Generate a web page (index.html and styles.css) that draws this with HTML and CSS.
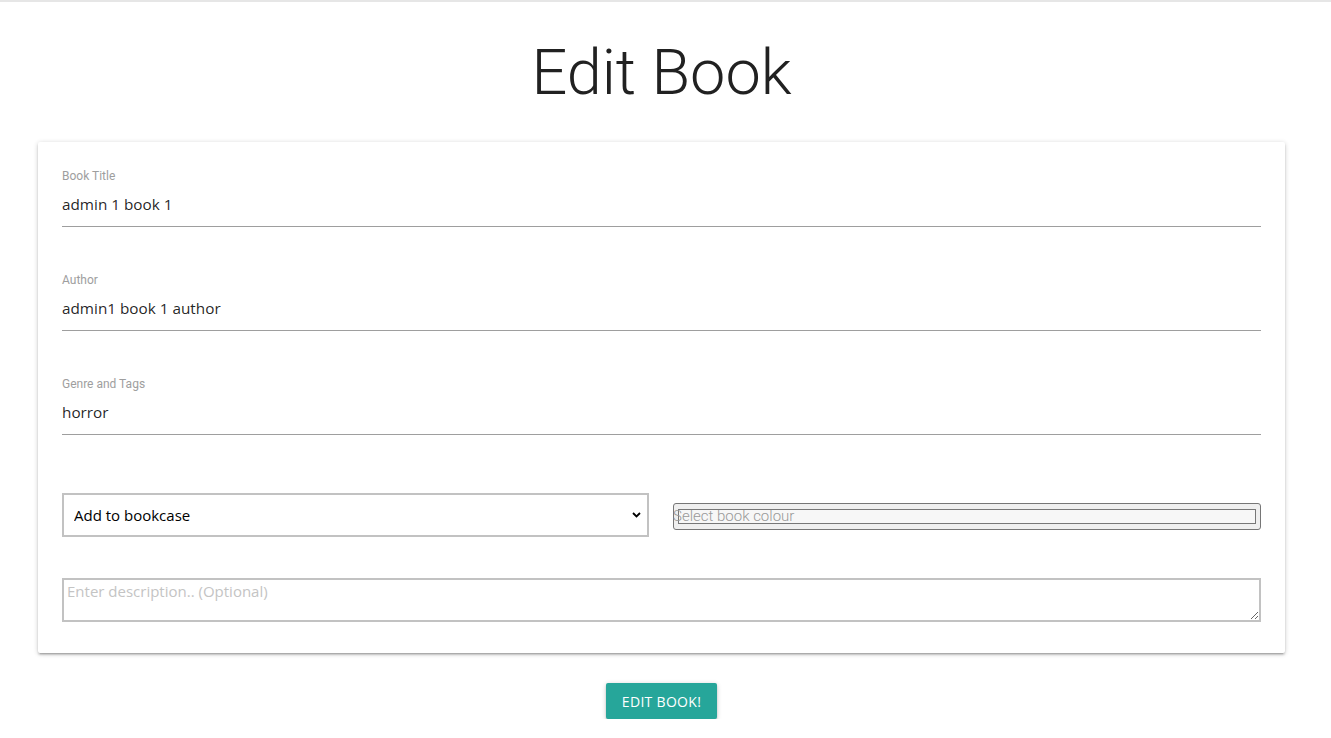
FILE: index.html
```html
<!DOCTYPE html>
<html lang="en">
<head>
<meta charset="utf-8">
<title>Edit Book</title>
<link rel="stylesheet" href="styles.css">
</head>
<body>
<main class="page">
  <h1 class="title">Edit Book</h1>
  <form class="card">
    <div class="field">
      <label class="field-label" for="title">Book Title</label>
      <input class="field-input" id="title" type="text" value="admin 1 book 1">
    </div>
    <div class="field">
      <label class="field-label" for="author">Author</label>
      <input class="field-input" id="author" type="text" value="admin1 book 1 author">
    </div>
    <div class="field">
      <label class="field-label" for="genre">Genre and Tags</label>
      <input class="field-input" id="genre" type="text" value="horror">
    </div>
    <div class="pair">
      <div class="select-wrap">
        <select class="select">
          <option>Add to bookcase</option>
        </select>
        <svg class="chevron" width="9" height="6" viewBox="0 0 9 6"><path d="M1 1 L4.5 4.5 L8 1" fill="none" stroke="#000" stroke-width="1.8"/></svg>
      </div>
      <div class="colour-wrap">
        <div class="colour">
          <div class="swatch"></div>
        </div>
        <span class="colour-text">Select book colour</span>
      </div>
    </div>
    <textarea class="desc" placeholder="Enter description.. (Optional)"></textarea>
  </form>
  <div class="actions">
    <button class="btn" type="button">Edit Book!</button>
  </div>
</main>
</body>
</html>
```
FILE: styles.css
```css
html, body {
  margin: 0;
  padding: 0;
  background: #fff;
}
body {
  border-top: 2px solid #e6e6e6;
  font-family: "Open Sans", "Noto Sans", sans-serif;
  color: rgba(0,0,0,0.87);
}
.page {
  width: 1247px;
  margin: 0 0 0 38px;
  display: flex;
  flex-direction: column;
}
.title {
  margin: 30px 0 0 0;
  height: 110px;
  font-family: Roboto, sans-serif;
  font-weight: 300;
  font-size: 63px;
  line-height: 82px;
  text-align: center;
  color: #212121;
}
.card {
  background: #fff;
  box-shadow: 0 2px 2px 0 rgba(0,0,0,.14), 0 3px 1px -2px rgba(0,0,0,.12), 0 1px 5px 0 rgba(0,0,0,.2);
  border-radius: 2px;
  padding: 27px 24px 31px 24px;
  display: flex;
  flex-direction: column;
}
.field {
  display: flex;
  flex-direction: column;
  gap: 3px;
  margin-bottom: 46px;
}
.field-label {
  font-family: Roboto, sans-serif;
  font-size: 12px;
  line-height: 14px;
  color: #9e9e9e;
}
.field-input {
  height: 36px;
  box-sizing: content-box;
  border: none;
  border-bottom: 1px solid #9e9e9e;
  padding: 0 0 4px 0;
  margin: 0;
  font-family: "Open Sans", sans-serif;
  font-size: 15.3px;
  color: rgba(0,0,0,0.87);
  outline: none;
  background: transparent;
}
.pair {
  margin-top: 12px;
  display: grid;
  grid-template-columns: 587px 1fr;
  gap: 24px;
  align-items: center;
}
.select-wrap {
  position: relative;
}
.select {
  appearance: none;
  -webkit-appearance: none;
  width: 100%;
  height: 44px;
  border: 2px solid #c2c2c2;
  border-radius: 0;
  background: #fff;
  padding: 0 0 0 10px;
  font-family: "Open Sans", sans-serif;
  font-size: 15px;
  color: #000;
  display: block;
}
.chevron {
  position: absolute;
  right: 8px;
  top: 19px;
}
.colour-wrap {
  position: relative;
  margin-top: 3px;
}
.colour {
  border: 1px solid #767676;
  border-radius: 3px;
  background: #efefef;
  padding: 5px 4px 5px 4px;
  box-sizing: border-box;
  height: 27px;
  display: flex;
}
.swatch {
  flex: 1;
  border: 1px solid #777;
  background: #f7f7f7;
}
.colour-text {
  position: absolute;
  left: 0;
  top: 3px;
  font-family: Roboto, sans-serif;
  font-weight: 300;
  font-size: 15px;
  line-height: 20px;
  color: #999;
}
.desc {
  margin-top: 41px;
  height: 44px;
  box-sizing: border-box;
  border: 2px solid #c2c2c2;
  padding: 0 3px;
  font-family: "Open Sans", sans-serif;
  font-size: 15px;
  line-height: 22px;
  resize: vertical;
  display: block;
  outline: none;
}
.desc::placeholder {
  color: #c4c4c4;
}
.actions {
  display: flex;
  justify-content: center;
  margin-top: 30px;
}
.btn {
  height: 36px;
  padding: 0 16px;
  border: none;
  border-radius: 2px;
  background: #26a69a;
  color: #fff;
  font-family: "Open Sans", sans-serif;
  font-size: 14px;
  letter-spacing: 0.3px;
  text-transform: uppercase;
  box-shadow: 0 2px 2px 0 rgba(0,0,0,.14), 0 3px 1px -2px rgba(0,0,0,.12), 0 1px 5px 0 rgba(0,0,0,.2);
}
```
